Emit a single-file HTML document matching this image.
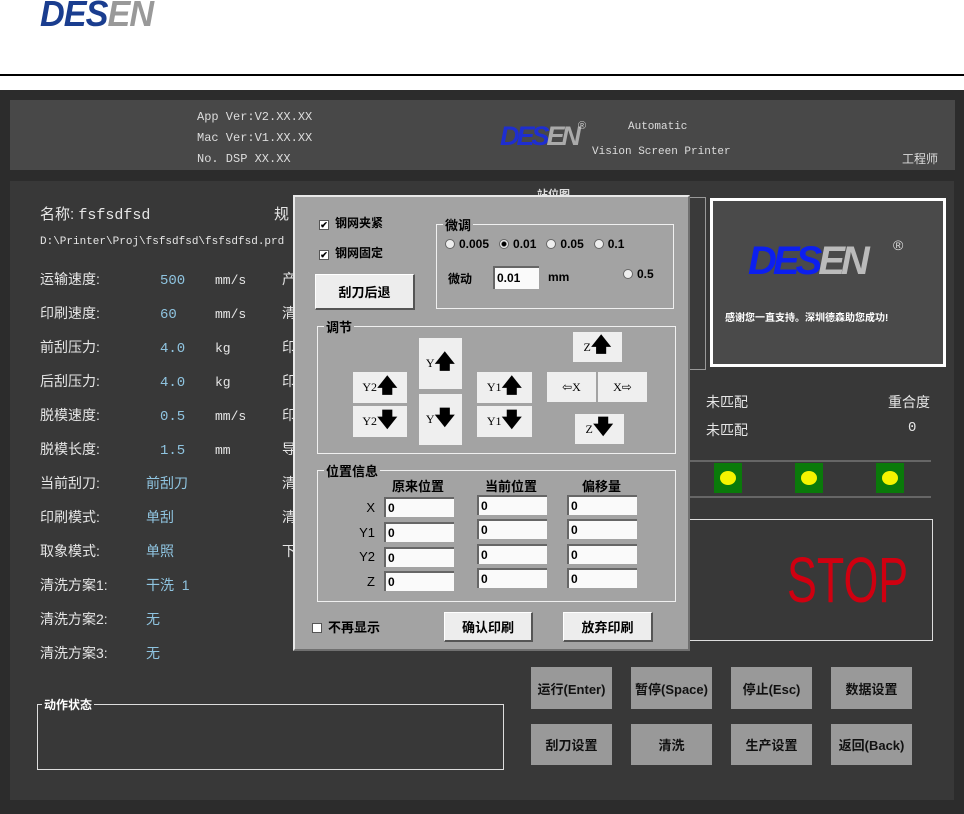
<!DOCTYPE html>
<html><head><meta charset="utf-8"><style>
*{margin:0;padding:0;box-sizing:border-box}
body{width:964px;height:814px;background:#fff;position:relative;overflow:hidden;font-family:"Liberation Sans","Noto Sans CJK SC",sans-serif}
.a{position:absolute}
.mono{font-family:"Liberation Mono","Noto Sans CJK SC",monospace}
.lbl{color:#e6e6e6;font-size:14px}
.val{color:#8fc4e0;font-size:14px}
.btn{position:absolute;background:#999;color:#111;font-weight:bold;font-size:13px;display:flex;align-items:center;justify-content:center}
.dlg{position:absolute;left:293px;top:195px;width:397px;height:456px;background:#a3a3a3;border:2px solid #e8e8e8;border-right-color:#707070;border-bottom-color:#707070}
.grp{position:absolute;border:1px solid #f0f0f0}
.grp>span{position:absolute;top:-10px;left:6px;background:#a3a3a3;padding:0 2px;font-weight:bold;font-size:13px;color:#000}
.b{font-weight:bold;font-size:12px;color:#000}
.kb{position:absolute;background:#efefef;font-size:12px;color:#000;display:flex;align-items:center;justify-content:center;font-family:"Liberation Serif",serif}
.inp{position:absolute;background:#fafafa;border-top:2px solid #666;border-left:2px solid #666;width:70px;height:20px;font-size:12px;font-weight:bold;padding-left:2px;line-height:18px}
.wbtn{position:absolute;background:#ededed;border:1px solid #fff;border-right:2px solid #555;border-bottom:2px solid #555;font-weight:bold;font-size:13px;display:flex;align-items:center;justify-content:center}
.rad{display:inline-block;width:10px;height:10px;border-radius:50%;background:#eee;border:1px solid #666;vertical-align:-1px;margin-right:4px}
.chk{display:inline-block;width:10px;height:10px;background:#fff;border:1px solid #555;font-size:9px;line-height:8px;text-align:center;margin-right:6px;vertical-align:-1px}
.dot{position:absolute;width:28px;height:30px;background:#0a7a0a}
.dot i{position:absolute;left:6px;top:8px;width:16px;height:14px;border-radius:50%;background:#f4f400}
</style></head><body>
<!-- top logo -->
<div class="a" style="left:40px;top:-4px;font:italic bold 36px 'Liberation Sans',sans-serif;letter-spacing:-1px;line-height:36px;transform:scaleX(0.95);transform-origin:left"><span style="color:#1a3d8f">DES</span><span style="color:#999">EN</span></div>
<div class="a" style="left:0;top:74px;width:964px;height:2px;background:#000"></div>
<div class="a" style="left:0;top:90px;width:964px;height:724px;background:#2c2c2c"></div>
<!-- header -->
<div class="a" style="left:10px;top:100px;width:945px;height:70px;background:#484848"></div>
<div class="a mono" style="left:197px;top:107px;color:#ddd;font-size:12px;line-height:21px">App Ver:V2.XX.XX<br>Mac Ver:V1.XX.XX<br>No. DSP XX.XX</div>
<div class="a" style="left:500px;top:122px;font:italic bold 27px 'Liberation Sans',sans-serif;letter-spacing:-3px;line-height:28px"><span style="color:#1e2ed0">DES</span><span style="color:#aaa">EN</span></div>
<div class="a" style="left:578px;top:120px;color:#ccc;font-size:11px">®</div>
<div class="a mono" style="left:628px;top:121px;color:#ddd;font-size:11px">Automatic</div>
<div class="a mono" style="left:592px;top:146px;color:#ddd;font-size:11px">Vision Screen Printer</div>
<div class="a" style="left:902px;top:150px;color:#ddd;font-size:12px">工程师</div>
<!-- main panel -->
<div class="a" style="left:10px;top:181px;width:944px;height:619px;background:#383838"></div>
<div class="a lbl" style="left:40px;top:203px;font-size:15px">名称: <span class="mono">fsfsdfsd</span></div>
<div class="a lbl" style="left:274px;top:203px;font-size:15px">规</div>
<div class="a lbl mono" style="left:40px;top:236px;font-size:11px">D:\Printer\Proj\fsfsdfsd\fsfsdfsd.prd</div>
<div class="a" style="left:40px;top:262px;line-height:34px">
<div class="lbl">运输速度:</div><div class="lbl">印刷速度:</div><div class="lbl">前刮压力:</div><div class="lbl">后刮压力:</div><div class="lbl">脱模速度:</div><div class="lbl">脱模长度:</div><div class="lbl">当前刮刀:</div><div class="lbl">印刷模式:</div><div class="lbl">取象模式:</div><div class="lbl">清洗方案1:</div><div class="lbl">清洗方案2:</div><div class="lbl">清洗方案3:</div></div>
<div class="a val mono" style="left:160px;top:264px;line-height:34px"><div>500</div><div>60</div><div>4.0</div><div>4.0</div><div>0.5</div><div>1.5</div></div>
<div class="a lbl mono" style="left:215px;top:264px;line-height:34px;font-size:13px"><div>mm/s</div><div>mm/s</div><div>kg</div><div>kg</div><div>mm/s</div><div>mm</div></div>
<div class="a val" style="left:146px;top:466px;line-height:34px"><div>前刮刀</div><div>单刮</div><div>单照</div><div>干洗&nbsp;&nbsp;1</div><div>无</div><div>无</div></div>
<div class="a lbl" style="left:282px;top:262px;line-height:34px"><div>产</div><div>清</div><div>印</div><div>印</div><div>印</div><div>导</div><div>清</div><div>清</div><div>下</div></div>
<!-- action status -->
<div class="a" style="left:37px;top:704px;width:467px;height:66px;border:1px solid #ddd"></div>
<div class="a" style="left:42px;top:696px;background:#383838;color:#fff;font-weight:bold;font-size:12px;padding:0 2px">动作状态</div>
<!-- right side -->
<div class="a" style="left:680px;top:197px;width:26px;height:173px;border:1px solid #999;border-left:none;background:#3a3a3a"></div>
<div class="a" style="left:537px;top:186px;color:#ddd;font-size:11px;font-weight:bold">站位图</div>
<div class="a" style="left:710px;top:198px;width:236px;height:169px;border:3px solid #fff;background:#4a4a4a"></div>
<div class="a" style="left:748px;top:240px;font:italic bold 40px 'Liberation Sans',sans-serif;letter-spacing:-4px;line-height:42px"><span style="color:#0c1fef">DES</span><span style="color:#bbb">EN</span></div>
<div class="a" style="left:893px;top:237px;color:#ddd;font-size:14px">®</div>
<div class="a" style="left:725px;top:309px;color:#fff;font-size:10px;font-weight:bold">感谢您一直支持。深圳德森助您成功!</div>
<div class="a lbl" style="left:706px;top:392px">未匹配</div>
<div class="a lbl" style="left:706px;top:420px">未匹配</div>
<div class="a lbl" style="left:888px;top:392px">重合度</div>
<div class="a lbl mono" style="left:908px;top:420px">0</div>
<div class="a" style="left:690px;top:460px;width:241px;height:2px;background:#666"></div>
<div class="a" style="left:690px;top:496px;width:241px;height:2px;background:#666"></div>
<div class="dot" style="left:714px;top:463px"><i></i></div>
<div class="dot" style="left:795px;top:463px"><i></i></div>
<div class="dot" style="left:876px;top:463px"><i></i></div>
<div class="a" style="left:690px;top:519px;width:243px;height:122px;border:1px solid #ddd;border-left:none"></div>
<div class="a" style="left:787px;top:545px;color:#d00010;font-size:64px;line-height:70px;transform:scaleX(0.7);transform-origin:left">STOP</div>
<div class="btn" style="left:531px;top:667px;width:81px;height:42px">运行(Enter)</div>
<div class="btn" style="left:631px;top:667px;width:81px;height:42px">暂停(Space)</div>
<div class="btn" style="left:731px;top:667px;width:81px;height:42px">停止(Esc)</div>
<div class="btn" style="left:831px;top:667px;width:81px;height:42px">数据设置</div>
<div class="btn" style="left:531px;top:724px;width:81px;height:41px">刮刀设置</div>
<div class="btn" style="left:631px;top:724px;width:81px;height:41px">清洗</div>
<div class="btn" style="left:731px;top:724px;width:81px;height:41px">生产设置</div>
<div class="btn" style="left:831px;top:724px;width:81px;height:41px">返回(Back)</div>
<!-- dialog -->
<div class="dlg">
<div class="a b" style="left:24px;top:17px"><span class="chk">✔</span>钢网夹紧</div>
<div class="a b" style="left:24px;top:47px"><span class="chk">✔</span>钢网固定</div>
<div class="wbtn" style="left:20px;top:77px;width:100px;height:36px">刮刀后退</div>
<div class="grp" style="left:141px;top:27px;width:238px;height:85px"><span>微调</span></div>
<div class="a b" style="left:150px;top:40px;font-size:12px"><span class="rad"></span>0.005&nbsp;&nbsp;&nbsp;<span class="rad" style="background:radial-gradient(#000 2px,#eee 3px)"></span>0.01&nbsp;&nbsp;&nbsp;<span class="rad"></span>0.05&nbsp;&nbsp;&nbsp;<span class="rad"></span>0.1</div>
<div class="a b" style="left:153px;top:73px">微动</div>
<div class="inp" style="left:198px;top:69px;width:46px;height:23px;line-height:20px">0.01</div>
<div class="a b" style="left:253px;top:73px">mm</div>
<div class="a b" style="left:328px;top:70px"><span class="rad"></span>0.5</div>
<div class="grp" style="left:22px;top:129px;width:359px;height:128px"><span>调节</span></div>
<div class="kb" style="left:58px;top:175px;width:54px;height:31px">Y2 <b style="font-size:20px">🡅</b></div>
<div class="kb" style="left:58px;top:209px;width:54px;height:31px">Y2 <b style="font-size:20px">🡇</b></div>
<div class="kb" style="left:124px;top:141px;width:43px;height:51px">Y <b style="font-size:20px">🡅</b></div>
<div class="kb" style="left:124px;top:197px;width:43px;height:51px">Y <b style="font-size:20px">🡇</b></div>
<div class="kb" style="left:182px;top:175px;width:55px;height:31px">Y1 <b style="font-size:20px">🡅</b></div>
<div class="kb" style="left:182px;top:209px;width:55px;height:31px">Y1 <b style="font-size:20px">🡇</b></div>
<div class="kb" style="left:278px;top:135px;width:49px;height:30px">Z <b style="font-size:20px">🡅</b></div>
<div class="kb" style="left:252px;top:175px;width:49px;height:30px">⇦X</div>
<div class="kb" style="left:303px;top:175px;width:49px;height:30px">X⇨</div>
<div class="kb" style="left:280px;top:217px;width:49px;height:30px">Z <b style="font-size:20px">🡇</b></div>
<div class="grp" style="left:22px;top:273px;width:359px;height:132px"><span>位置信息</span></div>
<div class="a b" style="left:97px;top:279px;font-size:13px">原来位置</div>
<div class="a b" style="left:190px;top:279px;font-size:13px">当前位置</div>
<div class="a b" style="left:287px;top:279px;font-size:13px">偏移量</div>
<div class="a" style="left:55px;top:299px;font-size:13px;line-height:24.5px;text-align:right;width:25px"><div>X</div><div>Y1</div><div>Y2</div><div>Z</div></div>
<div class="inp" style="left:89px;top:300px">0</div><div class="inp" style="left:182px;top:298px">0</div><div class="inp" style="left:272px;top:298px">0</div>
<div class="inp" style="left:89px;top:325px">0</div><div class="inp" style="left:182px;top:322px">0</div><div class="inp" style="left:272px;top:322px">0</div>
<div class="inp" style="left:89px;top:350px">0</div><div class="inp" style="left:182px;top:347px">0</div><div class="inp" style="left:272px;top:347px">0</div>
<div class="inp" style="left:89px;top:374px">0</div><div class="inp" style="left:182px;top:371px">0</div><div class="inp" style="left:272px;top:371px">0</div>
<div class="a b" style="left:17px;top:420px;font-size:13px"><span class="chk"></span>不再显示</div>
<div class="wbtn" style="left:149px;top:415px;width:89px;height:30px">确认印刷</div>
<div class="wbtn" style="left:268px;top:415px;width:90px;height:30px">放弃印刷</div>
</div>
</body></html>
